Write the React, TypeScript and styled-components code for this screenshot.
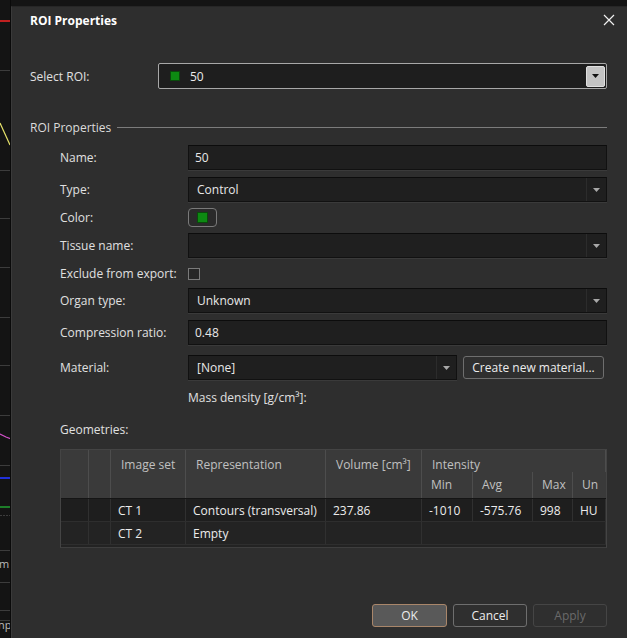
import styled, { createGlobalStyle } from 'styled-components';

const GlobalStyle = createGlobalStyle`
    html, body {
        margin: 0;
        padding: 0;
        background: #141414;
        overflow: hidden;
    }
    * {
        box-sizing: border-box;
    }
`;

const FONT = `"Open Sans", "Noto Sans", "Liberation Sans", sans-serif`;

const Page = styled.div`
    display: flex;
    width: 627px;
    height: 638px;
    font-family: ${FONT};
    font-size: 12px;
    color: #e6e6e6;
`;

const BackStrip = styled.div`
    width: 11px;
    flex-shrink: 0;
    background: #141414;
    overflow: hidden;
`;

const Dialog = styled.div`
    flex: 1;
    display: flex;
    flex-direction: column;
    margin-top: 6px;
    background: #2e2e2e;
    border-left: 1px solid #3a3a3a;
    border-top: 1px solid #262626;
`;

const TitleBar = styled.div`
    height: 26px;
    display: flex;
    align-items: center;
    justify-content: space-between;
    padding: 0 11px 0 18px;
`;

const Title = styled.div`
    font-weight: 700;
    font-size: 12px;
    color: #ffffff;
`;

const CloseButton = styled.div`
    width: 14px;
    height: 14px;
    display: flex;
    align-items: center;
    justify-content: center;
`;

const Body = styled.div`
    flex: 1;
    display: flex;
    flex-direction: column;
    padding: 0 20px 0 18px;
`;

const SelectRow = styled.div`
    display: grid;
    grid-template-columns: 128px 1fr;
    align-items: center;
    height: 26px;
    margin-top: 30px;
`;

const Label = styled.div`
    color: #e0e0e0;
    white-space: nowrap;
`;

const MainCombo = styled.div`
    height: 26px;
    display: flex;
    align-items: center;
    background: #1e1e1e;
    border: 1px solid #a8a8a8;
    border-radius: 2px;
    padding-left: 11px;
`;

const Swatch = styled.span<{ $size: number }>`
    display: inline-block;
    width: ${(p) => p.$size}px;
    height: ${(p) => p.$size}px;
    background: #0d8a12;
    border: 1px solid #0a4a0c;
`;

const ComboText = styled.span`
    flex: 1;
    margin-left: 10px;
    color: #ececec;
`;

const ComboButton = styled.div`
    width: 19px;
    height: 21px;
    margin-right: 1px;
    background: #c4c4c4;
    border: 1px solid #e0e0e0;
    border-radius: 2px;
    display: flex;
    align-items: center;
    justify-content: center;
`;

const GroupHeader = styled.div`
    display: flex;
    align-items: center;
    gap: 6px;
    margin-top: 30px;
    height: 16px;
    color: #dcdcdc;
    &::after {
        content: '';
        flex: 1;
        height: 1px;
        background: #7c7c7c;
    }
`;

const Form = styled.div`
    display: flex;
    flex-direction: column;
    padding-left: 30px;
    margin-top: 10px;
`;

const Row = styled.div<{ $gap: number }>`
    display: grid;
    grid-template-columns: 128px 1fr;
    align-items: center;
    height: 25px;
    margin-top: ${(p) => p.$gap}px;
`;

const Field = styled.div<{ $pad?: number }>`
    height: 25px;
    display: flex;
    align-items: center;
    background: #1f1f1f;
    border: 1px solid #111111;
    border-top-color: #0c0c0c;
    box-shadow: 0 1px 0 #3a3a3a;
    padding-left: ${(p) => p.$pad ?? 6}px;
    color: #e8e8e8;
`;

const DropField = styled(Field)`
    padding-right: 0;
`;

const DropText = styled.span`
    flex: 1;
`;

const DropArrow = styled.div`
    width: 20px;
    height: 100%;
    border-left: 1px solid #2c2c2c;
    display: flex;
    align-items: center;
    justify-content: center;
`;

const MaterialLine = styled.div`
    display: flex;
    align-items: center;
    gap: 6px;
`;

const MaterialDrop = styled(DropField)`
    width: 269px;
`;

const Button = styled.div<{ $width: number; $variant?: 'default' | 'primary' | 'disabled' }>`
    width: ${(p) => p.$width}px;
    height: 23px;
    display: flex;
    align-items: center;
    justify-content: center;
    border-radius: 3px;
    white-space: nowrap;
    border: 1px solid
        ${(p) => (p.$variant === 'primary' ? '#a9866a' : p.$variant === 'disabled' ? '#454545' : '#6e6e6e')};
    background: ${(p) => (p.$variant === 'primary' ? '#595959' : '#2f2f2f')};
    color: ${(p) => (p.$variant === 'disabled' ? '#6a6a6a' : '#ececec')};
`;

const ColorButton = styled.div`
    width: 29px;
    height: 19px;
    border: 1px solid #7a7a7a;
    border-radius: 4px;
    background: #2a2a2a;
    display: flex;
    align-items: center;
    justify-content: center;
`;

const CheckBox = styled.div`
    width: 12px;
    height: 12px;
    border: 1px solid #7a7a7a;
    background: #262626;
`;

const Table = styled.div`
    margin-top: 7px;
    width: 547px;
    height: 99px;
    background: #232323;
    border: 1px solid #444444;
    border-bottom-color: #3e3e3e;
`;

const COLS = '28px 22px 75px 140px 96px 51px 60px 40px 1fr';

const HeadGrid = styled.div`
    display: grid;
    grid-template-columns: ${COLS};
    grid-template-rows: 22px 26px;
    background: #3a3a3a;
    border-bottom: 1px solid #151515;
    color: #c0c0c0;
`;

const HeadCell = styled.div<{ $col: string; $row: string; $sub?: boolean; $noline?: boolean }>`
    grid-column: ${(p) => p.$col};
    grid-row: ${(p) => p.$row};
    padding: ${(p) => (p.$sub ? '4px 0 0 9px' : '6px 0 0 10px')};
    border-right: ${(p) => (p.$noline ? 'none' : '1px solid #4d4d4d')};
    white-space: nowrap;
    overflow: hidden;
`;

const BodyRow = styled.div<{ $shade: string }>`
    display: grid;
    grid-template-columns: ${COLS};
    height: 23px;
    background: ${(p) => p.$shade};
    border-bottom: 1px solid #2e2e2e;
`;

const Cell = styled.div<{ $span?: number }>`
    grid-column: span ${(p) => p.$span ?? 1};
    display: flex;
    align-items: center;
    padding-left: 7px;
    border-right: 1px solid #303030;
    white-space: nowrap;
    overflow: hidden;
    color: #ececec;
`;

const Footer = styled.div`
    display: flex;
    justify-content: flex-end;
    gap: 6px;
    padding: 0 20px 11px 0;
    margin-top: auto;
`;

const Arrow = ({ dark }: { dark?: boolean }) => (
    <svg width="7" height="4" viewBox="0 0 7 4">
        <path d="M0 0 L7 0 L3.5 4 Z" fill={dark ? '#111' : '#a8a8a8'} />
    </svg>
);

// the bit of the application window that shows left of the dialog
const StripDrawing = () => (
    <svg width="11" height="638" viewBox="0 0 11 638">
        <rect width="11" height="638" fill="#141414" />
        {[70, 170, 218, 267, 317, 365, 415, 465, 550, 582, 610, 620].map((y) => (
            <line key={y} x1="0" x2="11" y1={y + 0.5} y2={y + 0.5} stroke="#3c3c3c" />
        ))}
        <line x1="0" x2="11" y1="515.5" y2="515.5" stroke="#3c3c3c" strokeDasharray="2 1" />
        <line x1="0" x2="11" y1="21" y2="21" stroke="#c02020" strokeWidth="2" />
        <line x1="0" y1="123" x2="10" y2="145" stroke="#e6e26a" strokeWidth="1.2" />
        <path d="M0 434 L6 437 L11 439" stroke="#d050c8" strokeWidth="1.2" fill="none" />
        <line x1="0" x2="11" y1="478" y2="478" stroke="#2030d8" strokeWidth="2" />
        <line x1="0" x2="11" y1="507" y2="507" stroke="#20a030" strokeWidth="1.5" />
        <text x="-1" y="568" fontSize="11" fill="#bbb" fontFamily="Open Sans, sans-serif">m</text>
        <text x="-2" y="629" fontSize="11" fill="#bbb" fontFamily="Open Sans, sans-serif">np</text>
        <line x1="10.5" x2="10.5" y1="0" y2="638" stroke="#0a0a0a" />
    </svg>
);

export default function App() {
    return (
        <Page>
            <GlobalStyle />
            <BackStrip>
                <StripDrawing />
            </BackStrip>
            <Dialog>
                <TitleBar>
                    <Title>ROI Properties</Title>
                    <CloseButton>
                        <svg width="12" height="12" viewBox="0 0 12 12">
                            <path d="M1 1 L11 11 M11 1 L1 11" stroke="#f0f0f0" strokeWidth="1.2" />
                        </svg>
                    </CloseButton>
                </TitleBar>
                <Body>
                    <SelectRow>
                        <Label>Select ROI:</Label>
                        <MainCombo>
                            <Swatch $size={10} />
                            <ComboText>50</ComboText>
                            <ComboButton>
                                <Arrow dark />
                            </ComboButton>
                        </MainCombo>
                    </SelectRow>

                    <GroupHeader>ROI Properties</GroupHeader>

                    <Form>
                        <Row $gap={0}>
                            <Label>Name:</Label>
                            <Field>50</Field>
                        </Row>
                        <Row $gap={7}>
                            <Label>Type:</Label>
                            <DropField $pad={8}>
                                <DropText>Control</DropText>
                                <DropArrow>
                                    <Arrow />
                                </DropArrow>
                            </DropField>
                        </Row>
                        <Row $gap={3}>
                            <Label>Color:</Label>
                            <ColorButton>
                                <Swatch $size={11} />
                            </ColorButton>
                        </Row>
                        <Row $gap={3}>
                            <Label>Tissue name:</Label>
                            <DropField>
                                <DropText />
                                <DropArrow>
                                    <Arrow />
                                </DropArrow>
                            </DropField>
                        </Row>
                        <Row $gap={3}>
                            <Label>Exclude from export:</Label>
                            <CheckBox />
                        </Row>
                        <Row $gap={2}>
                            <Label>Organ type:</Label>
                            <DropField $pad={8}>
                                <DropText>Unknown</DropText>
                                <DropArrow>
                                    <Arrow />
                                </DropArrow>
                            </DropField>
                        </Row>
                        <Row $gap={7}>
                            <Label>Compression ratio:</Label>
                            <Field>0.48</Field>
                        </Row>
                        <Row $gap={10}>
                            <Label>Material:</Label>
                            <MaterialLine>
                                <MaterialDrop $pad={8}>
                                    <DropText>[None]</DropText>
                                    <DropArrow>
                                        <Arrow />
                                    </DropArrow>
                                </MaterialDrop>
                                <Button $width={141}>Create new material...</Button>
                            </MaterialLine>
                        </Row>
                        <Row $gap={5}>
                            <span />
                            <Label>Mass density [g/cm³]:</Label>
                        </Row>
                        <Row $gap={7}>
                            <Label>Geometries:</Label>
                            <span />
                        </Row>

                        <Table>
                            <HeadGrid>
                                <HeadCell $col="1" $row="1 / 3" />
                                <HeadCell $col="2" $row="1 / 3" />
                                <HeadCell $col="3" $row="1 / 3">Image set</HeadCell>
                                <HeadCell $col="4" $row="1 / 3">Representation</HeadCell>
                                <HeadCell $col="5" $row="1 / 3">Volume [cm³]</HeadCell>
                                <HeadCell $col="6 / 10" $row="1">Intensity</HeadCell>
                                <HeadCell $col="6" $row="2" $sub>Min</HeadCell>
                                <HeadCell $col="7" $row="2" $sub>Avg</HeadCell>
                                <HeadCell $col="8" $row="2" $sub>Max</HeadCell>
                                <HeadCell $col="9" $row="2" $sub $noline>Un</HeadCell>
                            </HeadGrid>
                            <BodyRow $shade="#1e1e1e">
                                <Cell />
                                <Cell />
                                <Cell>CT 1</Cell>
                                <Cell>Contours (transversal)</Cell>
                                <Cell>237.86</Cell>
                                <Cell>-1010</Cell>
                                <Cell>-575.76</Cell>
                                <Cell>998</Cell>
                                <Cell>HU</Cell>
                            </BodyRow>
                            <BodyRow $shade="#232323">
                                <Cell />
                                <Cell />
                                <Cell>CT 2</Cell>
                                <Cell>Empty</Cell>
                                <Cell />
                                <Cell $span={4} />
                            </BodyRow>
                        </Table>
                    </Form>
                </Body>
                <Footer>
                    <Button $width={75} $variant="primary">OK</Button>
                    <Button $width={74}>Cancel</Button>
                    <Button $width={74} $variant="disabled">Apply</Button>
                </Footer>
            </Dialog>
        </Page>
    );
}
